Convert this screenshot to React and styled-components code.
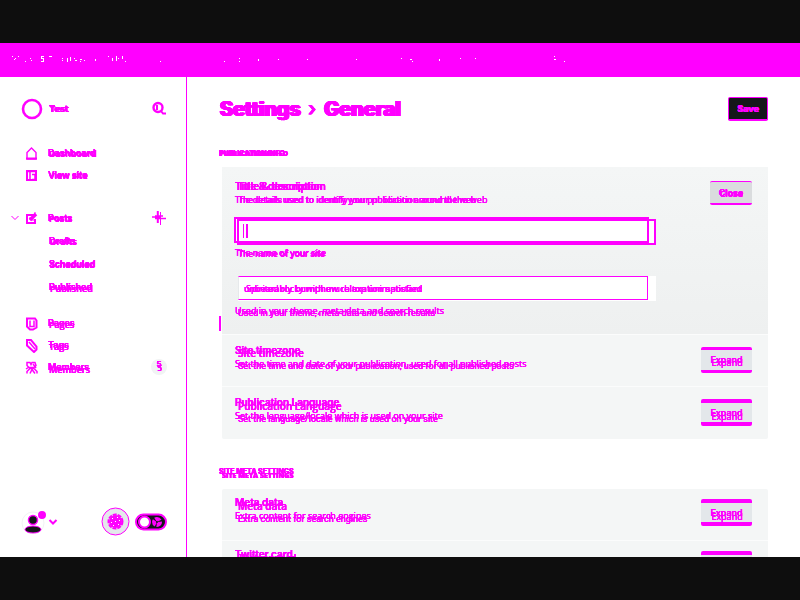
import React from "react";
import styled, { createGlobalStyle } from "styled-components";

const pink = "#ff00ff";
const ink = "#15171a";

const GlobalStyle = createGlobalStyle`
  *, *::before, *::after { box-sizing: border-box; }
  body { margin: 0; background: #0e0e0e; font-family: Inter, "Noto Sans", sans-serif; color: ${pink}; }
  button, input { font: inherit; color: inherit; }
  a { color: inherit; text-decoration: none; }
`;

const Screen = styled.div`
  display: flex;
  flex-direction: column;
  height: 100vh;
  padding: 43px 0;
  overflow: hidden;
`;

const Banner = styled.header`
  flex: none;
  height: 34px;
  background: ${pink};
  svg { display: block; }
`;

const Body = styled.div`
  flex: 1;
  min-height: 0;
  display: flex;
  background: #fff;
  overflow: hidden;
`;

const TwinText = styled.span`
  position: relative;
  display: inline-block;
  white-space: nowrap;
  text-shadow: 0 0 0 ${pink}, 0 0 0 ${pink}, 0 0 0 ${pink};
  &::after {
    content: attr(data-text);
    position: absolute;
    left: ${(p) => p.$x}px;
    top: ${(p) => p.$y}px;
    font-family: ${(p) => p.$font};
  }
`;

function Twin({ children, x = 1, y = 1, font = '"Open Sans", sans-serif' }) {
  return <TwinText data-text={children} $x={x} $y={y} $font={font}>{children}</TwinText>;
}

const Sidebar = styled.aside`
  flex: none;
  width: 187px;
  border-right: 1px solid ${pink};
  padding: 21px 19px 21px 10px;
  display: flex;
  flex-direction: column;
  font-size: 9px;
  line-height: 22px;
`;

const Brand = styled.div`
  display: flex;
  align-items: center;
  height: 22px;
  padding-left: 11px;
  gap: 6px;
  font-weight: 700;
  margin-bottom: 22px;
`;

const IconButton = styled.button`
  display: flex;
  padding: 0;
  border: 0;
  background: none;
  margin-left: ${(p) => (p.$end ? "auto" : "0")};
`;

const NavGroup = styled.nav`
  display: flex;
  flex-direction: column;
  margin-bottom: ${(p) => p.$gap}px;
  font-weight: 600;
`;

const NavLink = styled.a`
  display: flex;
  align-items: center;
  height: 22px;
  padding-left: 14px;
  > svg { flex: none; margin-right: 9px; }
`;

const NavRow = styled.div`
  display: flex;
  align-items: center;
  > a { flex: 1; padding-left: 4px; }
`;

const SubLink = styled.a`
  height: 23px;
  line-height: 23px;
  padding-left: 39px;
`;

const Badge = styled.span`
  width: 16px;
  height: 16px;
  margin-left: auto;
  border-radius: 8px;
  background: #f1f3f4;
  font-size: 8px;
  line-height: 10px;
  text-align: center;
`;

const SideFooter = styled.footer`
  display: flex;
  align-items: center;
  margin-top: auto;
  padding-left: 11px;
`;

const GearButton = styled.button`
  display: flex;
  padding: 0;
  border: 0;
  background: none;
  margin-left: auto;
  margin-right: 5px;
`;

const SwitchLabel = styled.label`
  position: relative;
  display: flex;
  input { position: absolute; opacity: 0; inset: 0; margin: 0; }
`;

const Content = styled.main`
  flex: 1;
  min-width: 0;
  padding: 20px 32px 0;
  overflow: hidden;
`;

const TitleBar = styled.div`
  display: flex;
  align-items: center;
  justify-content: space-between;
  height: 24px;
`;

const Title = styled.h1`
  display: flex;
  gap: 8px;
  margin: 0;
  font-size: 20px;
  line-height: 22px;
  font-weight: 700;
`;

const Crumb = styled.span`
  font-weight: 400;
`;

const Save = styled.button`
  width: 40px;
  height: 24px;
  padding: 0;
  border: 1px solid ${pink};
  border-bottom-width: 2px;
  border-radius: 2px;
  background: ${ink};
  font-size: 9px;
  line-height: 20px;
  font-weight: 700;
`;

const Label = styled.h2`
  margin: 27px 0 ${(p) => p.$gap}px;
  font-size: 7px;
  line-height: 12px;
  font-weight: 800;
  text-transform: uppercase;
`;

const Panel = styled.section`
  margin-left: 3px;
  border-radius: 2px;
  background: #f4f6f6;
`;

const Row = styled.div`
  display: flex;
  justify-content: space-between;
  align-items: flex-start;
  min-height: 52px;
  padding: ${(p) => p.$top}px 16px 0 13px;
  border-bottom: 1px solid #fbfcfc;
  &:last-child { border-bottom: 0; }
`;

const OpenRow = styled(Row)`
  padding-bottom: 17px;
  background: linear-gradient(#f4f6f6, #eef0f0);
`;

const Info = styled.div`
  flex: 1;
  min-width: 0;
`;

const RowTitle = styled.h3`
  margin: 0;
  font-size: 10px;
  line-height: 13px;
  font-weight: 600;
`;

const Note = styled.p`
  margin: 0;
  font-family: "Open Sans", sans-serif;
  font-size: 9px;
  line-height: 13px;
`;

const Expand = styled.button`
  width: 51px;
  height: ${(p) => (p.$thick === 3 ? 26 : 27)}px;
  margin-top: 3px;
  padding: 0;
  border: solid ${pink};
  border-width: ${(p) => p.$thick}px 0;
  border-radius: 2px;
  background: #e3e7ea;
  font-size: 9px;
  line-height: 16px;
  font-weight: 500;
`;

const Close = styled(Expand)`
  width: 42px;
  height: 24px;
  margin-top: 1px;
  border-width: 1px 0 2px;
  background: #dadcde;
  line-height: 20px;
  font-weight: 600;
`;

const Field = styled.div`
  position: relative;
  margin: ${(p) => p.$top}px 54px 0 -1px;
  label {
    display: block;
    padding-left: 1px;
    font-family: "Open Sans", sans-serif;
    font-size: 9px;
    line-height: 12px;
  }
`;

const NameBox = styled.div`
  position: relative;
  height: 28px;
  padding-right: 7px;
  margin-bottom: 2px;
  input {
    display: block;
    width: 100%;
    height: 26px;
    padding: 0 7px;
    border: 2px solid ${pink};
    background: #fff;
    outline: 0;
  }
  &::before {
    content: "";
    position: absolute;
    inset: 2px 0 0 3px;
    border: 2px solid ${pink};
    pointer-events: none;
    z-index: 1;
  }
  &::after {
    content: "";
    position: absolute;
    left: 9px;
    top: 7px;
    width: 5px;
    height: 14px;
    border-left: 1px solid ${pink};
    border-right: 2px solid ${pink};
  }
`;

const NameBacking = styled.span`
  position: absolute;
  inset: 2px 2px 0 auto;
  width: 5px;
  background: #fff;
`;

const DescriptionBox = styled.div`
  position: relative;
  height: 25px;
  margin: 0 0 4px 4px;
  padding-right: 8px;
  background: #fff;
  input {
    display: block;
    width: 100%;
    height: 24px;
    padding: 0 5px;
    border: 1px solid ${pink};
    border-left-color: #e6e9eb;
    background: #fff;
    font-size: 9px;
    font-weight: 500;
    text-shadow: 0 0 0 ${pink}, 0 0 0 ${pink};
    outline: 0;
  }
  &::after {
    content: "Spirited rocky with much top unimportant";
    position: absolute;
    left: 8px;
    top: 6px;
    font: 9px/14px "Open Sans", sans-serif;
    text-shadow: 0 0 0 ${pink}, 0 0 0 ${pink};
    white-space: nowrap;
  }
`;

const Marker = styled.span`
  position: absolute;
  left: -15px;
  bottom: -14px;
  width: 2px;
  height: 15px;
  background: ${pink};
`;

const Icon = ({ children, w = 15, h = 15 }) => (
  <svg width={w} height={h} viewBox={`0 0 ${w} ${h}`} fill="none" stroke={pink} strokeWidth="2" aria-hidden="true">{children}</svg>
);

const Home = () => <Icon><path d="M3 6.5 7.5 2l4.5 4.5V13H3Z" strokeWidth="1.4" /><path d="M2 12.5h11" /></Icon>;
const Layout = () => <Icon><path d="M3 3h9v9H3Z" /><path d="M2 3.500h11M6 4v8M8 6.500h3v5H8" strokeWidth="1.500" /></Icon>;
const Edit = () => <Icon><path d="M10 4H3v8h8V8" strokeWidth="2" /><path d="m6 9 6-6" strokeWidth="3.600" /><path d="M6 6v3h4M11 1v3" strokeWidth="1" /></Icon>;
const Pages = () => <Icon><path d="M3 2.500h8l1.500 2v7L9 13.500H6l-3-3Z" /><path d="M6 4.500v6h4v-6" strokeWidth="1.500" /></Icon>;
const Tag = () => <Icon><path d="M3 2h4l5.500 6.500v3L10 14 3 7.500Z" strokeWidth="2" /><path d="m5 4 6 7" strokeWidth="1.400" /></Icon>;
const People = () => <Icon><path d="M3 2.500h3l1 2 1-2h3l1 3-2 2H5l-2-2ZM3 13.500v-2l3-3h4l3 3v2M6 13.500l2-4 3 4M2 9l3-2M9 4l3 4" strokeWidth="1.500" /></Icon>;
const Search = () => <Icon w={16} h={16}><circle cx="7" cy="6.500" r="4.500" strokeWidth="2.400" /><path d="m10 10 2 2.500h3M6 4v5" strokeWidth="2" /></Icon>;
const Plus = () => <Icon w={16} h={16}><path d="M1 7h9M4 8.500h11M4 6h8" strokeWidth="1.500" /><path d="M6.800 1v12" /><path d="M9.500 2v13" strokeWidth="1" /></Icon>;
const Chevron = ({ thick = 1 }) => <Icon w={10} h={8}><path d="m1.500 2 3.500 3.500L8.500 2" strokeWidth={thick} /></Icon>;

const rows = [
  { title: "Site timezone", note: "Set the time and date of your publication, used for all published posts", thick: 3, top: 9 },
  { title: "Publication Language", note: "Set the language/locale which is used on your site", thick: 4, top: 9 },
];
const metaRows = [
  { title: "Meta data", note: "Extra content for search engines", thick: 4, top: 7 },
  { title: "Twitter card", note: "Customized structured data of your site", thick: 4, top: 7 },
];

function SettingRow({ title, note, thick, top }) {
  return (
    <Row $top={top}>
      <Info>
        <RowTitle><Twin x={3} y={thick}>{title}</Twin></RowTitle>
        <Note><Twin x={3} y={thick} font="Roboto, sans-serif">{note}</Twin></Note>
      </Info>
      <Expand type="button" $thick={thick}><Twin x={1} y={thick}>Expand</Twin></Expand>
    </Row>
  );
}

export default function App() {
  return (
    <>
      <GlobalStyle />
      <Screen>
        <Banner>
          <svg width="600" height="34" stroke="#fff" strokeWidth="1" aria-hidden="true">
            <path d="M12 13.5h1M14 16.5h1M15 15.5h1M18 13.5h1M25 18.5h1M30 15.5h1M31 17.5h1M41 13.5h3M41 14.5h1M41 15.5h3M43 16.5h1M43 17.5h1M41 18.5h3M49 13.5h3M62 15.5h1M62 17.5h1M67.5 15v4M70.5 14v4M74 15.5h1M75 17.5h2M80 16.5h2M80 18.5h1M84 17.5h1M95.5 16v2M108 13.5h1M112.5 15v3M116.5 13v5M118 15.5h1M122.5 13v3M125 18.5h1M160 18.5h1M224 18.5h1M239 15.5h1M239 18.5h1M258.5 16v2M278 16.5h1M307 16.5h1M356 16.5h1M401 15.5h1M410 16.5h2M412 18.5h1M439.5 16v2M460 15.5h1M475 15.5h1M554 13.5h1M554 16.5h2M564 18.5h1" />
          </svg>
        </Banner>
        <Body>
          <Sidebar>
            <Brand>
              <Icon w={22} h={22}><circle cx="11" cy="11" r="9" strokeWidth="2.600" /></Icon>
              <Twin x={1} y={0}>Test</Twin>
              <IconButton $end type="button" aria-label="Search"><Search /></IconButton>
            </Brand>
            <NavGroup $gap={21}>
              <NavLink href="#dashboard"><Home /><Twin>Dashboard</Twin></NavLink>
              <NavLink href="#site"><Layout /><Twin>View site</Twin></NavLink>
            </NavGroup>
            <NavGroup $gap={14}>
              <NavRow>
                <IconButton type="button" aria-label="Collapse posts"><Chevron /></IconButton>
                <NavLink href="#posts"><Edit /><Twin>Posts</Twin></NavLink>
                <IconButton type="button" aria-label="New post"><Plus /></IconButton>
              </NavRow>
              <SubLink href="#drafts"><Twin>Drafts</Twin></SubLink>
              <SubLink href="#scheduled"><Twin>Scheduled</Twin></SubLink>
              <SubLink href="#published"><Twin y={2}>Published</Twin></SubLink>
            </NavGroup>
            <NavGroup $gap={0}>
              <NavLink href="#pages"><Pages /><Twin y={2}>Pages</Twin></NavLink>
              <NavLink href="#tags"><Tag /><Twin y={2}>Tags</Twin></NavLink>
              <NavLink href="#members"><People /><Twin y={3}>Members</Twin><Badge><Twin x={1} y={4}>5</Twin></Badge></NavLink>
            </NavGroup>
            <SideFooter>
              <IconButton type="button" aria-label="Account">
                <Icon w={27} h={25}>
                  <circle cx="12" cy="14" r="11" stroke="#f1f3f4" strokeWidth="1" />
                  <circle cx="12" cy="11" r="4.500" fill={ink} strokeWidth="1.500" />
                  <ellipse cx="12" cy="20.500" rx="8" ry="3.500" fill={ink} strokeWidth="1" />
                  <circle cx="21" cy="6" r="3" fill={pink} />
                </Icon>
              </IconButton>
              <IconButton type="button" aria-label="Account menu"><Chevron thick={2} /></IconButton>
              <GearButton type="button" aria-label="Settings">
                <Icon w={29} h={29}>
                  <circle cx="14.500" cy="14.500" r="13.500" fill="#e4e8eb" strokeWidth="1" />
                  <circle cx="14.500" cy="14.500" r="7" strokeWidth="2" strokeDasharray="4 1" />
                  <circle cx="14.500" cy="14.500" r="5.500" fill={pink} />
                  <path d="M11 11.500h1M16 10.500h1M18 13.500h1M10 15.500h1M14 14.500h1M17 17.500h1M12 18.500h1" stroke="#fff" strokeWidth="1" />
                </Icon>
              </GearButton>
              <SwitchLabel>
                <input type="checkbox" aria-label="Dark mode" />
                <Icon w={32} h={18}>
                  <rect x="1" y="1.500" width="30" height="15" rx="7.500" fill={ink} />
                  <circle cx="9.500" cy="9" r="5.500" fill="#fff" />
                  <circle cx="22" cy="9" r="3" strokeWidth="4" strokeDasharray="5 1" />
                </Icon>
              </SwitchLabel>
            </SideFooter>
          </Sidebar>
          <Content>
            <TitleBar>
              <Title>
                <Twin x={2} y={0} font="Inter, sans-serif">Settings</Twin>
                <Crumb><Twin x={1} y={0} font="Inter, sans-serif">›</Twin></Crumb>
                <Twin x={2} y={0} font="Inter, sans-serif">General</Twin>
              </Title>
              <Save type="button"><Twin x={1} y={0}>Save</Twin></Save>
            </TitleBar>
            <Label $gap={7}><Twin x={1} y={0}>Publication info</Twin></Label>
            <Panel>
              <OpenRow $top={13}>
                <Info>
                  <RowTitle><Twin x={3} y={0}>Title & description</Twin></RowTitle>
                  <Note><Twin x={3} y={1} font="Roboto, sans-serif">The details used to identify your publication around the web</Twin></Note>
                  <Field $top={11}>
                    <NameBox><NameBacking /><input id="name" /></NameBox>
                    <label htmlFor="name"><Twin x={3} y={1} font="Roboto, sans-serif">The name of your site</Twin></label>
                  </Field>
                  <Field $top={17}>
                    <DescriptionBox><input id="description" defaultValue="unbearably burnphew relaxation satisfied" /></DescriptionBox>
                    <label htmlFor="description"><Twin x={3} y={2} font="Roboto, sans-serif">Used in your theme, meta data and search results</Twin></label>
                    <Marker />
                  </Field>
                </Info>
                <Close type="button"><Twin x={1} y={1}>Close</Twin></Close>
              </OpenRow>
              {rows.map((row) => <SettingRow key={row.title} {...row} />)}
            </Panel>
            <Label $gap={11}><Twin x={3} y={4}>Site meta settings</Twin></Label>
            <Panel>{metaRows.map((row) => <SettingRow key={row.title} {...row} />)}</Panel>
          </Content>
        </Body>
      </Screen>
    </>
  );
}
